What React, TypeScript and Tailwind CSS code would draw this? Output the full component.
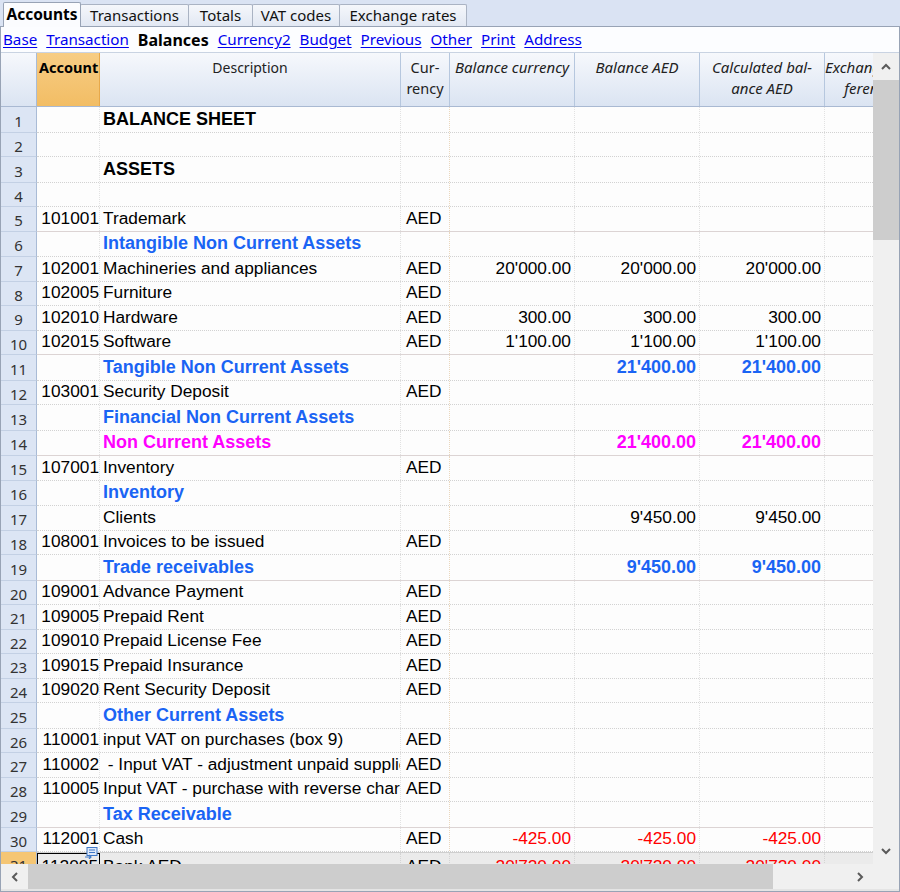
import React from 'react';

type Kind = 'plain' | 'title' | 'group' | 'total' | 'neg';

type Row = {
  n: number;
  acc?: string;
  desc?: string;
  cur?: string;
  a?: string;
  b?: string;
  c?: string;
  kind?: Kind;
  solid?: boolean;
};

const rows: Row[] = [
  { n: 1, desc: 'BALANCE SHEET', kind: 'title' },
  { n: 2 },
  { n: 3, desc: 'ASSETS', kind: 'title' },
  { n: 4 },
  { n: 5, acc: '101001', desc: 'Trademark', cur: 'AED', solid: true },
  { n: 6, desc: 'Intangible Non Current Assets', kind: 'group' },
  { n: 7, acc: '102001', desc: 'Machineries and appliances', cur: 'AED', a: "20'000.00", b: "20'000.00", c: "20'000.00" },
  { n: 8, acc: '102005', desc: 'Furniture', cur: 'AED' },
  { n: 9, acc: '102010', desc: 'Hardware', cur: 'AED', a: '300.00', b: '300.00', c: '300.00' },
  { n: 10, acc: '102015', desc: 'Software', cur: 'AED', a: "1'100.00", b: "1'100.00", c: "1'100.00", solid: true },
  { n: 11, desc: 'Tangible Non Current Assets', kind: 'group', b: "21'400.00", c: "21'400.00" },
  { n: 12, acc: '103001', desc: 'Security Deposit', cur: 'AED' },
  { n: 13, desc: 'Financial Non Current Assets', kind: 'group' },
  { n: 14, desc: 'Non Current Assets', kind: 'total', b: "21'400.00", c: "21'400.00", solid: true },
  { n: 15, acc: '107001', desc: 'Inventory', cur: 'AED' },
  { n: 16, desc: 'Inventory', kind: 'group' },
  { n: 17, desc: 'Clients', b: "9'450.00", c: "9'450.00" },
  { n: 18, acc: '108001', desc: 'Invoices to be issued', cur: 'AED' },
  { n: 19, desc: 'Trade receivables', kind: 'group', b: "9'450.00", c: "9'450.00", solid: true },
  { n: 20, acc: '109001', desc: 'Advance Payment', cur: 'AED' },
  { n: 21, acc: '109005', desc: 'Prepaid Rent', cur: 'AED' },
  { n: 22, acc: '109010', desc: 'Prepaid License Fee', cur: 'AED' },
  { n: 23, acc: '109015', desc: 'Prepaid Insurance', cur: 'AED' },
  { n: 24, acc: '109020', desc: 'Rent Security Deposit', cur: 'AED' },
  { n: 25, desc: 'Other Current Assets', kind: 'group' },
  { n: 26, acc: '110001', desc: 'input VAT on purchases (box 9)', cur: 'AED' },
  { n: 27, acc: '110002', desc: ' - Input VAT - adjustment unpaid supplier invoices', cur: 'AED' },
  { n: 28, acc: '110005', desc: 'Input VAT - purchase with reverse charge', cur: 'AED' },
  { n: 29, desc: 'Tax Receivable', kind: 'group', solid: true },
  { n: 30, acc: '112001', desc: 'Cash', cur: 'AED', a: '-425.00', b: '-425.00', c: '-425.00', kind: 'neg' },
];

const cols = 'grid grid-cols-[63px_301px_49px_125px_125px_125px_88px] w-[876px] shrink-0';

const tabs = [
  { label: 'Accounts', w: 'w-[78px]', active: true },
  { label: 'Transactions', w: 'w-[109px]' },
  { label: 'Totals', w: 'w-[65px]' },
  { label: 'VAT codes', w: 'w-[88px]' },
  { label: 'Exchange rates', w: 'w-[128px]' },
];

const links = ['Base', 'Transaction', 'Balances', 'Currency2', 'Budget', 'Previous', 'Other', 'Print', 'Address'];

function Chevron({ dir }: { dir: 'up' | 'down' | 'left' | 'right' }) {
  const d = {
    up: 'M1 6 L5 2 L9 6',
    down: 'M1 2 L5 6 L9 2',
    left: 'M6 1 L2 5 L6 9',
    right: 'M2 1 L6 5 L2 9',
  }[dir];
  const vertical = dir === 'up' || dir === 'down';
  return (
    <svg width={vertical ? 10 : 8} height={vertical ? 8 : 10} viewBox={vertical ? '0 0 10 8' : '0 0 8 10'}>
      <path d={d} fill="none" stroke="#5a5a5a" strokeWidth="2" />
    </svg>
  );
}

function RowNum({ n, h, selected }: { n: number; h: string; selected?: boolean }) {
  return (
    <div
      className={`${h} w-[36px] shrink-0 flex items-center justify-center pt-[3px] text-[15px] text-[#333] border-r border-b border-r-[#a9bbd6] border-b-[#c3d0e4] ${
        selected ? 'bg-[#f5c674]' : 'bg-[#dce5f4]'
      }`}
    >
      {n}
    </div>
  );
}

function DataRow({ r }: { r: Row }) {
  const bold = r.kind === 'title' || r.kind === 'group' || r.kind === 'total';
  const h = bold ? 'h-[25.5px]' : 'h-[24.5px]';
  const descColor =
    r.kind === 'group'
      ? 'text-[#1a64f4] font-bold text-[18px]'
      : r.kind === 'total'
        ? 'text-[#ff00ff] font-bold text-[18px]'
        : r.kind === 'title'
          ? 'text-black font-bold text-[18px]'
          : 'text-black';
  const numColor =
    r.kind === 'group'
      ? 'text-[#1a64f4] font-bold text-[18px]'
      : r.kind === 'total'
        ? 'text-[#ff00ff] font-bold text-[18px]'
        : r.kind === 'neg'
          ? 'text-[#ff0000]'
          : 'text-black';
  const line = r.solid
    ? 'border-b border-b-[#dcd4d4]'
    : 'border-b border-b-[#d2d2d2] [border-bottom-style:dotted]';
  const cell = 'flex items-center overflow-hidden whitespace-pre border-r border-r-[#e2e2e2] [border-right-style:dotted]';
  return (
    <div className="flex">
      <RowNum n={r.n} h={h} />
      <div className={`${cols} ${h} ${line} font-['Liberation_Sans',Arial,sans-serif] text-[17.3px]`}>
        <div className={`${cell} justify-end`}>{r.acc}</div>
        <div className={`${cell} pl-[3px] ${descColor}`}>{r.desc}</div>
        <div className={`${cell} pl-[5px] border-r-[#ead7bd]`}>{r.cur}</div>
        <div className={`${cell} justify-end pr-[3px] ${numColor}`}>{r.a}</div>
        <div className={`${cell} justify-end pr-[3px] ${numColor}`}>{r.b}</div>
        <div className={`${cell} justify-end pr-[3px] ${numColor}`}>{r.c}</div>
        <div className={cell}></div>
      </div>
    </div>
  );
}

function SelectedRow() {
  const cell = 'flex items-center overflow-hidden whitespace-pre border-r border-r-[#d4d4d4] [border-right-style:dotted]';
  return (
    <div className="flex">
      <RowNum n={31} h="h-[24.5px]" selected />
      <div className={`${cols} h-[24.5px] bg-[#ebebeb] font-['Liberation_Sans',Arial,sans-serif] text-[17.3px] border-t border-t-[#cfcfcf]`}>
        <div className="relative flex items-center justify-end border border-black pr-[1px]">
          112005
          <svg className="absolute right-[1px] top-[-7px]" width="13" height="12" viewBox="0 0 13 12">
            <rect x="2" y="0.5" width="10" height="8" fill="#dfe9f8" stroke="#3f78c8" />
            <path d="M4 3 H10 M4 5.5 H10" stroke="#3f78c8" />
            <path d="M0 10 H6 M4 8 L6 10 L4 12" fill="none" stroke="#3f78c8" strokeWidth="1.2" />
          </svg>
        </div>
        <div className={`${cell} pl-[3px]`}>Bank AED</div>
        <div className={`${cell} pl-[5px]`}>AED</div>
        <div className={`${cell} justify-end pr-[3px] text-[#ff0000]`}>20'720.00</div>
        <div className={`${cell} justify-end pr-[3px] text-[#ff0000]`}>20'720.00</div>
        <div className={`${cell} justify-end pr-[3px] text-[#ff0000]`}>20'720.00</div>
        <div className={cell}></div>
      </div>
    </div>
  );
}

function Header() {
  const hcell = 'border-r border-r-[#b6c7de] pt-[4px] leading-[21px] text-[#222] text-center';
  return (
    <div className="flex h-[54px] shrink-0 border-b border-[#a9b9d2] bg-gradient-to-b from-[#f6f8fc] to-[#dbe4f2]">
      <div className="w-[36px] shrink-0 border-r border-r-[#a9bbd6]" />
      <div className={cols}>
        <div className="bg-gradient-to-b from-[#f7cd84] to-[#f2bd64] border-r border-r-[#e8a94a] pl-[2px] pt-[4px] leading-[21px] text-[14.5px] font-bold text-black">
          Account
        </div>
        <div className={`${hcell} text-[14px]`}>Description</div>
        <div className={`${hcell} text-[14.5px]`}>
          Cur-
          <br />
          rency
        </div>
        <div className={`${hcell} text-[15px] italic`}>Balance currency</div>
        <div className={`${hcell} text-[15px] italic`}>Balance AED</div>
        <div className={`${hcell} text-[15px] italic`}>
          Calculated bal-
          <br />
          ance AED
        </div>
        <div className={`${hcell} text-[15px] italic whitespace-nowrap`}>
          Exchange dif-
          <br />
          ference
        </div>
      </div>
    </div>
  );
}

export default function App() {
  return (
    <div className="w-[900px] h-[892px] flex flex-col overflow-hidden bg-[#dae3f3] font-['Noto_Sans',sans-serif]">
      {/* tab strip */}
      <div className="h-[27px] shrink-0 flex items-end pl-[3px] border-b border-[#98a3b5]">
        {tabs.map((t) =>
          t.active ? (
            <div
              key={t.label}
              className={`${t.w} h-[25px] -mb-px z-10 flex items-center justify-center bg-[#fbfcfe] border border-b-0 border-[#98a3b5] rounded-t-[2px] text-[15.5px] font-bold text-black`}
            >
              {t.label}
            </div>
          ) : (
            <div
              key={t.label}
              className={`${t.w} h-[22px] -ml-px flex items-center justify-center bg-gradient-to-b from-[#f5f7fb] to-[#e2e8f3] border border-b-0 border-[#aab3c3] rounded-t-[2px] text-[15px] text-[#111]`}
            >
              {t.label}
            </div>
          ),
        )}
      </div>

      <div className="flex-1 min-h-0 flex flex-col bg-white border-x border-b border-[#98a3b5]">
        {/* view links */}
        <div className="h-[25px] shrink-0 flex items-center gap-[9px] pl-[2px] bg-[#fcfdff] text-[15.2px]">
          {links.map((l) =>
            l === 'Balances' ? (
              <span key={l} className="font-bold text-black text-[16px]">
                {l}
              </span>
            ) : (
              <span key={l} className="text-[#0000ee] underline underline-offset-[2px]">
                {l}
              </span>
            ),
          )}
        </div>

        {/* table + vertical scrollbar */}
        <div className="flex-1 min-h-0 flex border-t border-[#c9d3e2]">
          <div className="flex-1 min-w-0 overflow-hidden flex flex-col bg-[#fdfdfd]">
            <Header />
            {rows.map((r) => (
              <DataRow key={r.n} r={r} />
            ))}
            <SelectedRow />
          </div>
          <div className="w-[26px] shrink-0 flex flex-col bg-[#f0f0f0]">
            <div className="h-[27px] flex items-center justify-center">
              <Chevron dir="up" />
            </div>
            <div className="h-[160px] bg-[#cdcdcd]" />
            <div className="flex-1" />
            <div className="h-[26px] flex items-center justify-center">
              <Chevron dir="down" />
            </div>
          </div>
        </div>

        {/* horizontal scrollbar */}
        <div className="h-[25px] shrink-0 flex bg-[#f0f0f0]">
          <div className="w-[27px] flex items-center justify-center">
            <Chevron dir="left" />
          </div>
          <div className="w-[745px] bg-[#cdcdcd]" />
          <div className="flex-1" />
          <div className="w-[27px] flex items-center justify-center">
            <Chevron dir="right" />
          </div>
          <div className="w-[26px] bg-[#f0f0f0]" />
        </div>
        <div className="h-[2px] shrink-0 bg-[#e4e4e4]" />
      </div>
    </div>
  );
}
